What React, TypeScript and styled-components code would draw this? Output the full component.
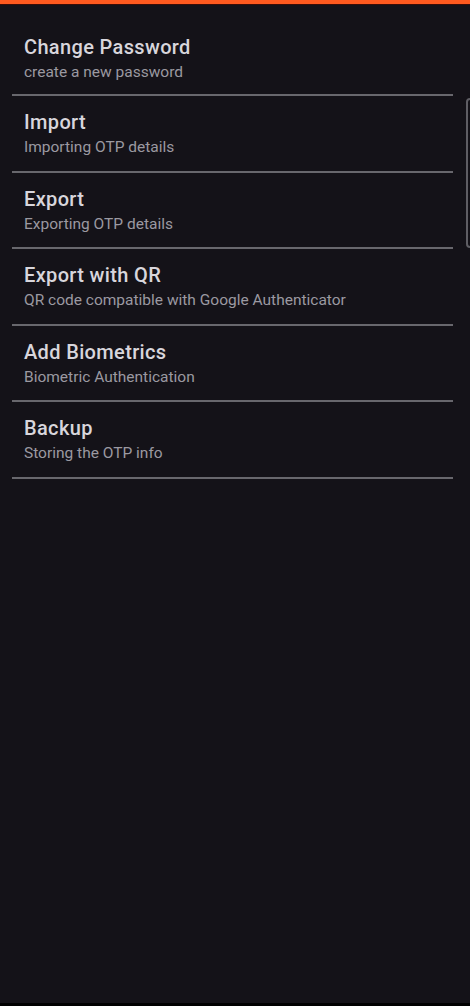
import React from "react";
import styled, { createGlobalStyle } from "styled-components";

const Global = createGlobalStyle`
  html, body { margin: 0; padding: 0; background: #141218; }
  body { font-family: Roboto, "Noto Sans", sans-serif; }
  * { box-sizing: border-box; }
`;

const Screen = styled.div`
  position: relative;
  width: 470px;
  height: 1006px;
  background: #141218;
  display: flex;
  flex-direction: column;
  overflow: hidden;
`;

const TopBar = styled.div`
  height: 4px;
  background: #ff5a1f;
  border-bottom: 1px solid #3a0d08;
  box-sizing: content-box;
`;

const List = styled.div`
  display: flex;
  flex-direction: column;
  padding: 14.5px 17px 0 12px;
  flex: 1;
`;

const Row = styled.div<{ $first?: boolean }>`
  display: flex;
  flex-direction: column;
  padding: ${(p) => (p.$first ? "14.5px 0 11px 12px" : "12px 0 11.5px 12px")};
  border-bottom: 2px solid #68676d;
`;

const Title = styled.div<{ $first?: boolean }>`
  font-size: 20px;
  font-weight: 500;
  letter-spacing: 0.35px;
  color: #d8d6dc;
  line-height: ${(p) => (p.$first ? "27px" : "28px")};
`;

const Subtitle = styled.div<{ $first?: boolean }>`
  font-size: 15.5px;
  font-weight: 400;
  color: #9b99a1;
  line-height: ${(p) => (p.$first ? "22px" : "23px")};
`;

const Scrollbar = styled.div`
  position: absolute;
  right: -4px;
  top: 98px;
  width: 8px;
  height: 150px;
  border: 2px solid #5f5e64;
  border-radius: 4px;
`;

const BottomEdge = styled.div`
  height: 3px;
  background: #000;
`;

const items = [
  ["Change Password", "create a new password"],
  ["Import", "Importing OTP details"],
  ["Export", "Exporting OTP details"],
  ["Export with QR", "QR code compatible with Google Authenticator"],
  ["Add Biometrics", "Biometric Authentication"],
  ["Backup", "Storing the OTP info"],
];

export default function App() {
  return (
    <Screen>
      <Global />
      <TopBar />
      <List>
        {items.map(([t, s], i) => (
          <Row key={t} $first={i === 0}>
            <Title $first={i === 0}>{t}</Title>
            <Subtitle $first={i === 0}>{s}</Subtitle>
          </Row>
        ))}
      </List>
      <BottomEdge />
      <Scrollbar />
    </Screen>
  );
}
